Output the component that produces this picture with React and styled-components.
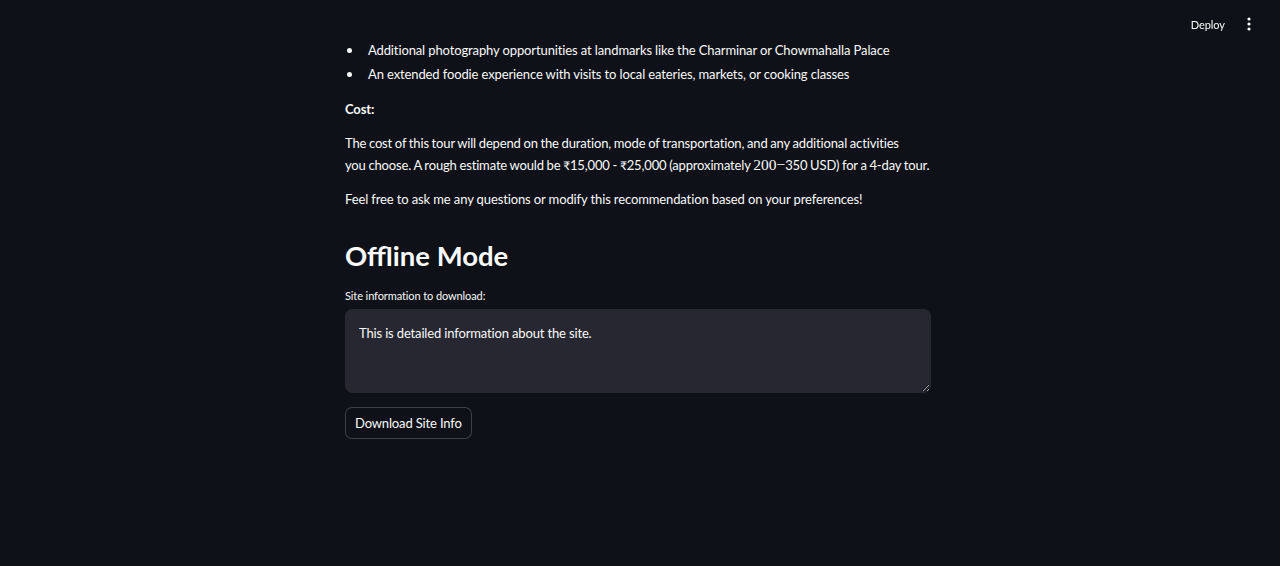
import React from "react";
import styled, { createGlobalStyle } from "styled-components";

const Global = createGlobalStyle`
  html, body { margin: 0; padding: 0; background: #0e1117; }
  body { font-family: Lato, "Liberation Sans", sans-serif; color: #fafafa; }
  * { box-sizing: border-box; }
`;

const Page = styled.div`
  min-height: 566px;
  background: #0e1117;
`;

const Header = styled.header`
  position: fixed;
  top: 0;
  left: 0;
  right: 0;
  height: 48px;
  display: flex;
  align-items: center;
  justify-content: flex-end;
  gap: 18px;
  padding-right: 25px;
`;

const DeployButton = styled.button`
  background: transparent;
  border: none;
  color: #fafafa;
  font-family: Lato, "Liberation Sans", sans-serif;
  font-size: 11px;
  letter-spacing: -0.05px;
  padding: 0;
  cursor: pointer;
`;

const MenuButton = styled.button`
  background: transparent;
  border: none;
  padding: 0;
  width: 12px;
  height: 16px;
  display: flex;
  align-items: center;
  justify-content: center;
  color: #fafafa;
`;

const Main = styled.main`
  width: 586px;
  margin-left: 345px;
  padding-top: 38px;
  display: flex;
  flex-direction: column;
  font-size: 13px;
  letter-spacing: -0.12px;
`;

const List = styled.ul`
  list-style: none;
  margin: 0;
  padding: 0;
`;

const Item = styled.li`
  display: flex;
  align-items: center;
  gap: 16px;
  padding-left: 2px;
  line-height: 24px;
`;

const Dot = styled.span`
  width: 5px;
  height: 5px;
  border-radius: 50%;
  background: #fafafa;
  flex: none;
`;

const Para = styled.p`
  margin: 12px 0 0;
  line-height: 22px;
  font-weight: ${(p) => (p.$bold ? 700 : 400)};
  letter-spacing: ${(p) => (p.$tight ? "-0.15px" : "inherit")};
  word-spacing: ${(p) => (p.$tight ? "-0.45px" : "normal")};
`;

const Rupee = styled.span`
  font-size: 12px;
  line-height: 1;
`;

const Math = styled.span`
  font-family: "Liberation Serif", "DejaVu Serif", serif;
  font-size: 15.5px;
  line-height: 1;
  letter-spacing: 0;
  word-spacing: normal;
`;

const Heading = styled.h2`
  margin: 29px 0 0;
  font-size: 27.5px;
  line-height: 34px;
  font-weight: 700;
  letter-spacing: 0;
`;

const Label = styled.label`
  margin-top: 15px;
  font-size: 11px;
  line-height: 16px;
  letter-spacing: -0.1px;
`;

const TextArea = styled.textarea`
  margin-top: 5px;
  width: 586px;
  height: 84px;
  background: #262730;
  border: 1px solid #262730;
  border-radius: 7px;
  color: #fafafa;
  font-family: Lato, "Liberation Sans", sans-serif;
  font-size: 13px;
  letter-spacing: -0.15px;
  line-height: 22px;
  padding: 12px 13px;
  resize: vertical;
  outline: none;
`;

const Button = styled.button`
  margin-top: 14px;
  align-self: flex-start;
  height: 32px;
  padding: 0 9px;
  background: #0e1117;
  border: 1px solid rgba(250, 250, 250, 0.2);
  border-radius: 7px;
  color: #fafafa;
  font-family: Lato, "Liberation Sans", sans-serif;
  font-size: 13px;
  letter-spacing: -0.15px;
  cursor: pointer;
`;

export default function App() {
  return (
    <Page>
      <Global />
      <Header>
        <DeployButton>Deploy</DeployButton>
        <MenuButton aria-label="Main menu">
          <svg width="4" height="14" viewBox="0 0 4 14">
            <circle cx="2" cy="2" r="1.6" fill="#fafafa" />
            <circle cx="2" cy="7" r="1.6" fill="#fafafa" />
            <circle cx="2" cy="12" r="1.6" fill="#fafafa" />
          </svg>
        </MenuButton>
      </Header>
      <Main>
        <List>
          <Item>
            <Dot />
            Additional photography opportunities at landmarks like the Charminar or Chowmahalla Palace
          </Item>
          <Item>
            <Dot />
            An extended foodie experience with visits to local eateries, markets, or cooking classes
          </Item>
        </List>
        <Para $bold>Cost:</Para>
        <Para $tight>
          The cost of this tour will depend on the duration, mode of transportation, and any additional activities
          <br />
          you choose. A rough estimate would be <Rupee>₹</Rupee>15,000 - <Rupee>₹</Rupee>25,000 (approximately{" "}
          <Math>200−</Math>350 USD) for a 4-day tour.
        </Para>
        <Para>Feel free to ask me any questions or modify this recommendation based on your preferences!</Para>
        <Heading>Offline Mode</Heading>
        <Label htmlFor="site-info">Site information to download:</Label>
        <TextArea id="site-info" defaultValue="This is detailed information about the site." />
        <Button>Download Site Info</Button>
      </Main>
    </Page>
  );
}
